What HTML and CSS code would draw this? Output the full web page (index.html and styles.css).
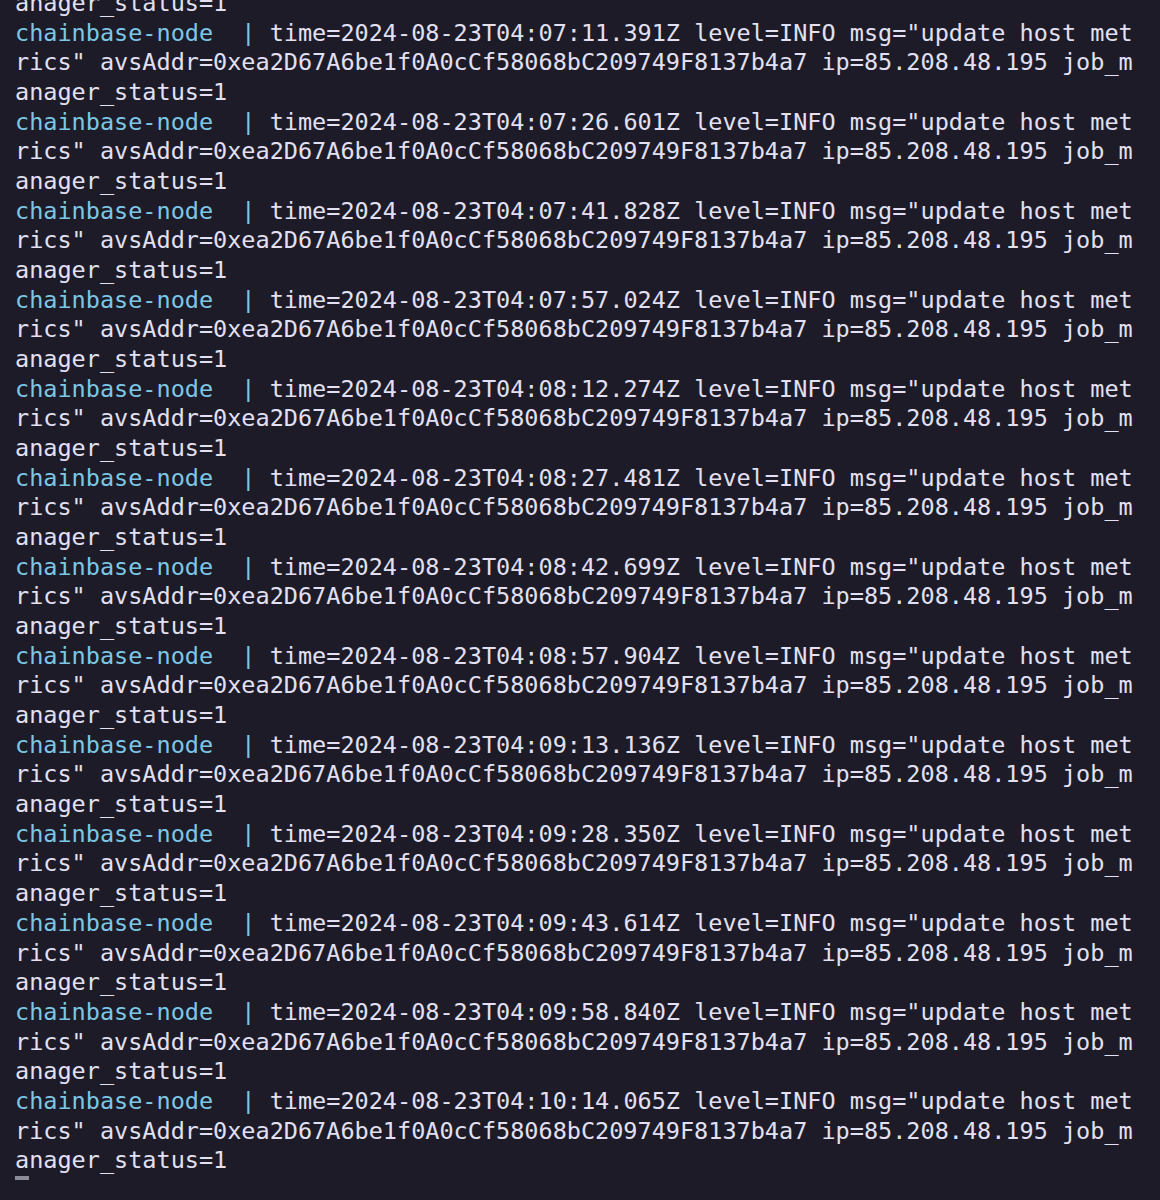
FILE: index.html
```html
<!DOCTYPE html>
<html>
<head>
<meta charset="utf-8">
<link rel="stylesheet" href="styles.css">
</head>
<body>
<pre class="term"><span class="ln">anager_status=1</span>
<span class="ln"><span class="svc">chainbase-node  |</span> time=2024-08-23T04:07:11.391Z level=INFO msg="update host met</span>
<span class="ln">rics" avsAddr=0xea2D67A6be1f0A0cCf58068bC209749F8137b4a7 ip=85.208.48.195 job_m</span>
<span class="ln">anager_status=1</span>
<span class="ln"><span class="svc">chainbase-node  |</span> time=2024-08-23T04:07:26.601Z level=INFO msg="update host met</span>
<span class="ln">rics" avsAddr=0xea2D67A6be1f0A0cCf58068bC209749F8137b4a7 ip=85.208.48.195 job_m</span>
<span class="ln">anager_status=1</span>
<span class="ln"><span class="svc">chainbase-node  |</span> time=2024-08-23T04:07:41.828Z level=INFO msg="update host met</span>
<span class="ln">rics" avsAddr=0xea2D67A6be1f0A0cCf58068bC209749F8137b4a7 ip=85.208.48.195 job_m</span>
<span class="ln">anager_status=1</span>
<span class="ln"><span class="svc">chainbase-node  |</span> time=2024-08-23T04:07:57.024Z level=INFO msg="update host met</span>
<span class="ln">rics" avsAddr=0xea2D67A6be1f0A0cCf58068bC209749F8137b4a7 ip=85.208.48.195 job_m</span>
<span class="ln">anager_status=1</span>
<span class="ln"><span class="svc">chainbase-node  |</span> time=2024-08-23T04:08:12.274Z level=INFO msg="update host met</span>
<span class="ln">rics" avsAddr=0xea2D67A6be1f0A0cCf58068bC209749F8137b4a7 ip=85.208.48.195 job_m</span>
<span class="ln">anager_status=1</span>
<span class="ln"><span class="svc">chainbase-node  |</span> time=2024-08-23T04:08:27.481Z level=INFO msg="update host met</span>
<span class="ln">rics" avsAddr=0xea2D67A6be1f0A0cCf58068bC209749F8137b4a7 ip=85.208.48.195 job_m</span>
<span class="ln">anager_status=1</span>
<span class="ln"><span class="svc">chainbase-node  |</span> time=2024-08-23T04:08:42.699Z level=INFO msg="update host met</span>
<span class="ln">rics" avsAddr=0xea2D67A6be1f0A0cCf58068bC209749F8137b4a7 ip=85.208.48.195 job_m</span>
<span class="ln">anager_status=1</span>
<span class="ln"><span class="svc">chainbase-node  |</span> time=2024-08-23T04:08:57.904Z level=INFO msg="update host met</span>
<span class="ln">rics" avsAddr=0xea2D67A6be1f0A0cCf58068bC209749F8137b4a7 ip=85.208.48.195 job_m</span>
<span class="ln">anager_status=1</span>
<span class="ln"><span class="svc">chainbase-node  |</span> time=2024-08-23T04:09:13.136Z level=INFO msg="update host met</span>
<span class="ln">rics" avsAddr=0xea2D67A6be1f0A0cCf58068bC209749F8137b4a7 ip=85.208.48.195 job_m</span>
<span class="ln">anager_status=1</span>
<span class="ln"><span class="svc">chainbase-node  |</span> time=2024-08-23T04:09:28.350Z level=INFO msg="update host met</span>
<span class="ln">rics" avsAddr=0xea2D67A6be1f0A0cCf58068bC209749F8137b4a7 ip=85.208.48.195 job_m</span>
<span class="ln">anager_status=1</span>
<span class="ln"><span class="svc">chainbase-node  |</span> time=2024-08-23T04:09:43.614Z level=INFO msg="update host met</span>
<span class="ln">rics" avsAddr=0xea2D67A6be1f0A0cCf58068bC209749F8137b4a7 ip=85.208.48.195 job_m</span>
<span class="ln">anager_status=1</span>
<span class="ln"><span class="svc">chainbase-node  |</span> time=2024-08-23T04:09:58.840Z level=INFO msg="update host met</span>
<span class="ln">rics" avsAddr=0xea2D67A6be1f0A0cCf58068bC209749F8137b4a7 ip=85.208.48.195 job_m</span>
<span class="ln">anager_status=1</span>
<span class="ln"><span class="svc">chainbase-node  |</span> time=2024-08-23T04:10:14.065Z level=INFO msg="update host met</span>
<span class="ln">rics" avsAddr=0xea2D67A6be1f0A0cCf58068bC209749F8137b4a7 ip=85.208.48.195 job_m</span>
<span class="ln">anager_status=1</span>
<span class="ln"><span class="cursor"> </span></span></pre>
</body>
</html>
```

FILE: styles.css
```css
html, body {
  margin: 0;
  padding: 0;
  background: #1c1b27;
  height: 100%;
  overflow: hidden;
}

.term {
  margin: -11px 0 0 0;
  padding: 0 0 0 15px;
  font-family: "DejaVu Sans Mono", "Liberation Mono", monospace;
  font-size: 23.5px;
  line-height: 29.67px;
  color: #e2e0f2;
  white-space: pre;
}

.svc {
  color: #7cc7e6;
}

.cursor {
  display: inline-block;
  width: 14px;
  height: 29.67px;
  vertical-align: top;
  background: linear-gradient(to bottom, #8c8c9a 0, #8c8c9a 4px, transparent 4px);
}
```
